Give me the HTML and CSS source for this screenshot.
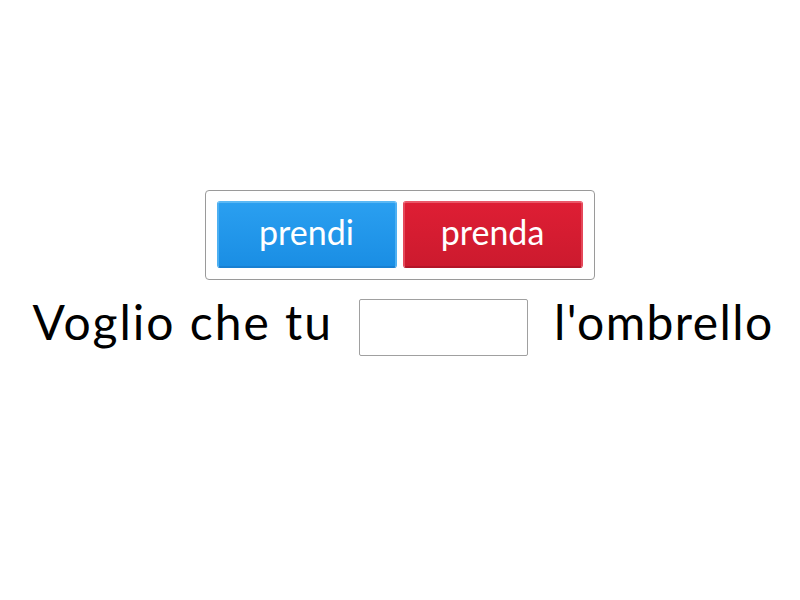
FILE: index.html
```html
<!DOCTYPE html>
<html lang="it">
<head>
<meta charset="utf-8">
<link rel="stylesheet" href="styles.css">
</head>
<body>
<div class="stage">
  <div class="options">
    <div class="btn btn-blue">prendi</div>
    <div class="btn btn-red">prenda</div>
  </div>
  <div class="sentence">
    <span class="word">Voglio che tu</span>
    <span class="blank"></span>
    <span class="word word-end">l'ombrello</span>
  </div>
</div>
</body>
</html>
```
FILE: styles.css
```css
html, body {
  margin: 0;
  padding: 0;
  background: #fff;
}
body {
  font-family: Lato, "Open Sans", sans-serif;
  color: #000;
}
.stage {
  display: flex;
  flex-direction: column;
  align-items: center;
  padding-top: 190px;
}
.options {
  display: flex;
  gap: 6px;
  padding: 10px 11px 11px 11px;
  border: 1px solid #9a9a9a;
  border-radius: 4px;
  margin-left: -1px;
}
.btn {
  box-sizing: border-box;
  width: 180px;
  height: 67px;
  border-radius: 3px;
  color: #fff;
  font-size: 34px;
  display: flex;
  align-items: center;
  justify-content: center;
  padding-bottom: 6px;
}
.btn-blue {
  background: linear-gradient(#2a9ff0, #1a8ee4);
  border: 2px solid #4db0f2;
  border-bottom-color: #1880d2;
  border-top-color: #5ab8f4;
}
.btn-red {
  background: linear-gradient(#de1e34, #cc1a2e);
  border: 2px solid #e5485a;
  border-bottom-color: #b31528;
  border-top-color: #ea5869;
}
.sentence {
  display: flex;
  align-items: center;
  gap: 26px;
  margin-top: 18px;
  margin-left: 6px;
}
.word {
  font-size: 48px;
  letter-spacing: 2px;
  line-height: 1;
  margin-bottom: 10px;
}
.word-end {
  letter-spacing: 1.4px;
}
.blank {
  box-sizing: border-box;
  width: 169px;
  height: 57px;
  border: 1px solid #a0a0a0;
  border-radius: 2px;
  background: #fff;
}
```
